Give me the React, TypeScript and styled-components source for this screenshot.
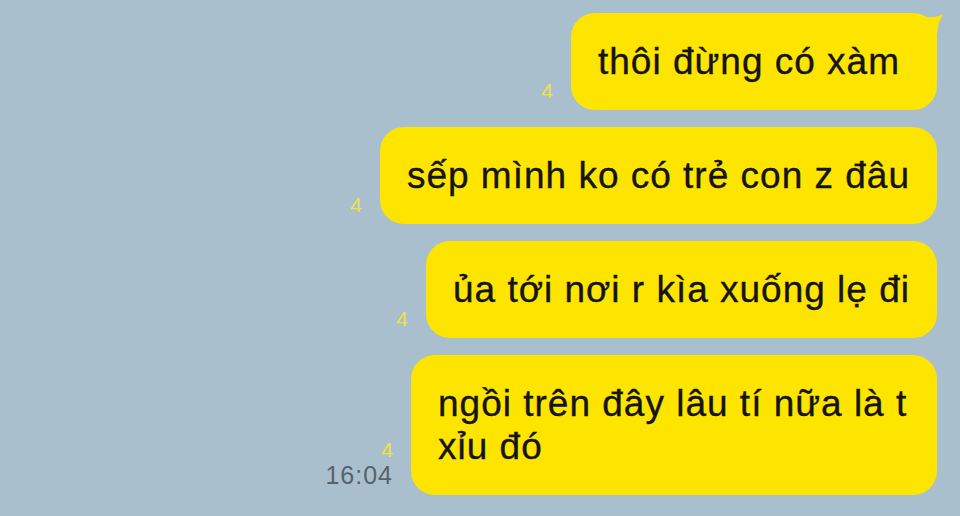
import React from 'react';
import styled, { createGlobalStyle } from 'styled-components';

const GlobalStyle = createGlobalStyle`
  html, body {
    margin: 0;
    padding: 0;
    background: #aabfce;
  }
  body {
    font-family: 'Liberation Sans', Arial, sans-serif;
  }
`;

const Screen = styled.div`
  width: 960px;
  height: 516px;
  overflow: hidden;
  background: #aabfce;
  box-sizing: border-box;
  padding: 13px 23px 0 0;
  display: flex;
  flex-direction: column;
  align-items: flex-end;
  gap: 17px;
`;

const Row = styled.div`
  display: flex;
  justify-content: flex-end;
  align-items: flex-end;
  gap: 18px;
`;

const Meta = styled.div`
  display: flex;
  flex-direction: column;
  align-items: flex-end;
  padding-bottom: 7px;
`;

const ReadCount = styled.span`
  color: #efe445;
  font-size: 21px;
  line-height: 24px;
`;

const Time = styled.span`
  color: #56626d;
  font-size: 25px;
  line-height: 26px;
  letter-spacing: 1px;
`;

const Bubble = styled.div<{ $maxWidth?: number; $tail?: boolean }>`
  position: relative;
  background: #fee500;
  border-radius: 24px;
  padding: 27px ${p => (p.$tail ? '37px' : '27px')} 27px 27px;
  max-width: ${p => (p.$maxWidth ? `${p.$maxWidth}px` : 'none')};
  box-sizing: border-box;
  color: #141414;
  font-size: 37px;
  line-height: 43px;
  letter-spacing: 1px;
  -webkit-text-stroke: 0.35px #141414;
`;

const Tail = styled.svg`
  position: absolute;
  top: 0;
  right: -8px;
  width: 24px;
  height: 30px;
`;

type Message = {
  text: string;
  read: string;
  time?: string;
  tail?: boolean;
  maxWidth?: number;
};

const messages: Message[] = [
  { text: 'thôi đừng có xàm', read: '4', tail: true },
  { text: 'sếp mình ko có trẻ con z đâu', read: '4' },
  { text: 'ủa tới nơi r kìa xuống lẹ đi', read: '4' },
  { text: 'ngồi trên đây lâu tí nữa là t xỉu đó', read: '4', time: '16:04', maxWidth: 526 },
];

const App: React.FC = () => {
  return (
    <>
      <GlobalStyle />
      <Screen>
        {messages.map((m, i) => (
          <Row key={i}>
            <Meta>
              <ReadCount>{m.read}</ReadCount>
              {m.time && <Time>{m.time}</Time>}
            </Meta>
            <Bubble $maxWidth={m.maxWidth} $tail={m.tail}>
              {m.tail && (
                <Tail viewBox="0 0 24 30">
                  <path d="M4 4 Q14 5 22 1.5 Q17 8 16 22 L4 22 Z" fill="#fee500" />
                </Tail>
              )}
              {m.text}
            </Bubble>
          </Row>
        ))}
      </Screen>
    </>
  );
};

export default App;
